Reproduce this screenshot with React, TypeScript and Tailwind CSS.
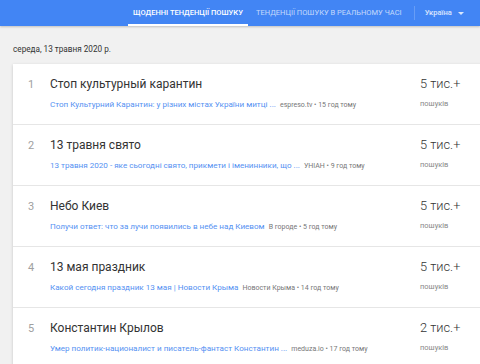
import React from "react";

const rows = [
  { n: 1, title: "Стоп культурный карантин", link: "Стоп Культурний Карантин: у різних містах України митці ...", src: "espreso.tv • 15 год тому", count: "5 тис.+" },
  { n: 2, title: "13 травня свято", link: "13 травня 2020 - яке сьогодні свято, прикмети і іменинники, що ...", src: "УНІАН • 9 год тому", count: "5 тис.+" },
  { n: 3, title: "Небо Киев", link: "Получи ответ: что за лучи появились в небе над Киевом", src: "В городе • 5 год тому", count: "5 тис.+" },
  { n: 4, title: "13 мая праздник", link: "Какой сегодня праздник 13 мая | Новости Крыма", src: "Новости Крыма • 14 год тому", count: "5 тис.+" },
  { n: 5, title: "Константин Крылов", link: "Умер политик-националист и писатель-фантаст Константин ...", src: "meduza.io • 17 год тому", count: "2 тис.+" },
];

export default function App() {
  return (
    <div className="w-[480px] h-[364px] overflow-hidden bg-[#f1f1f1]" style={{ fontFamily: "Roboto, 'Noto Sans', sans-serif" }}>
      <div className="h-[26px] bg-[#4285f4] flex items-stretch shadow-[0_1px_2px_rgba(0,0,0,0.2)] whitespace-nowrap">
        <div className="w-[128px]" />
        <div className="w-[120px] flex items-center justify-center relative text-white text-[7.5px] font-medium">
          ЩОДЕННІ ТЕНДЕНЦІЇ ПОШУКУ
          <div className="absolute left-0 right-0 bottom-0 h-[2px] bg-white" />
        </div>
        <div className="flex items-center pl-[8px] pr-[12px] text-white/70 text-[7.5px]">
          ТЕНДЕНЦІЇ ПОШУКУ В РЕАЛЬНОМУ ЧАСІ
        </div>
        <div className="flex items-center">
          <div className="w-px h-[14px] bg-white/20" />
        </div>
        <div className="flex items-center pl-[10px] text-white/80 text-[7.5px] font-medium gap-[6px]">
          Україна
          <svg width="6" height="3" viewBox="0 0 6 3"><path d="M0 0h6L3 3z" fill="rgba(255,255,255,0.8)" /></svg>
        </div>
      </div>
      <div className="pl-[13px] pt-[17px] h-[64px] text-[8.2px] text-[#333]">середа, 13 травня 2020 р.</div>
      <div className="-mt-[26px] ml-[13px] w-[480px] bg-white shadow-[0_1px_3px_rgba(0,0,0,0.18)]">
        {rows.map((r, i) => (
          <div key={r.n} className={`flex h-[61px] ${i < rows.length - 1 ? "border-b border-[#e6e6e6]" : ""}`}>
            <div className="w-[37px] pt-[13px] pl-[15px] text-[11px] text-[#a0a0a0]">{r.n}</div>
            <div className="w-[370px] pt-[12px]">
              <div className="text-[12px] text-[#333] leading-[16px]">{r.title}</div>
              <div className="mt-[6px] flex items-baseline whitespace-nowrap">
                <span className="text-[8.1px] text-[#5591f2]">{r.link}</span>
                <span className="ml-[4px] text-[7px] text-[#777]">{r.src}</span>
              </div>
            </div>
            <div className="pt-[11px]">
              <div className="text-[12.8px] font-light text-[#333] leading-[18px]">{r.count}</div>
              <div className="mt-[5px] text-[7.5px] text-[#888]">пошуків</div>
            </div>
          </div>
        ))}
      </div>
    </div>
  );
}
